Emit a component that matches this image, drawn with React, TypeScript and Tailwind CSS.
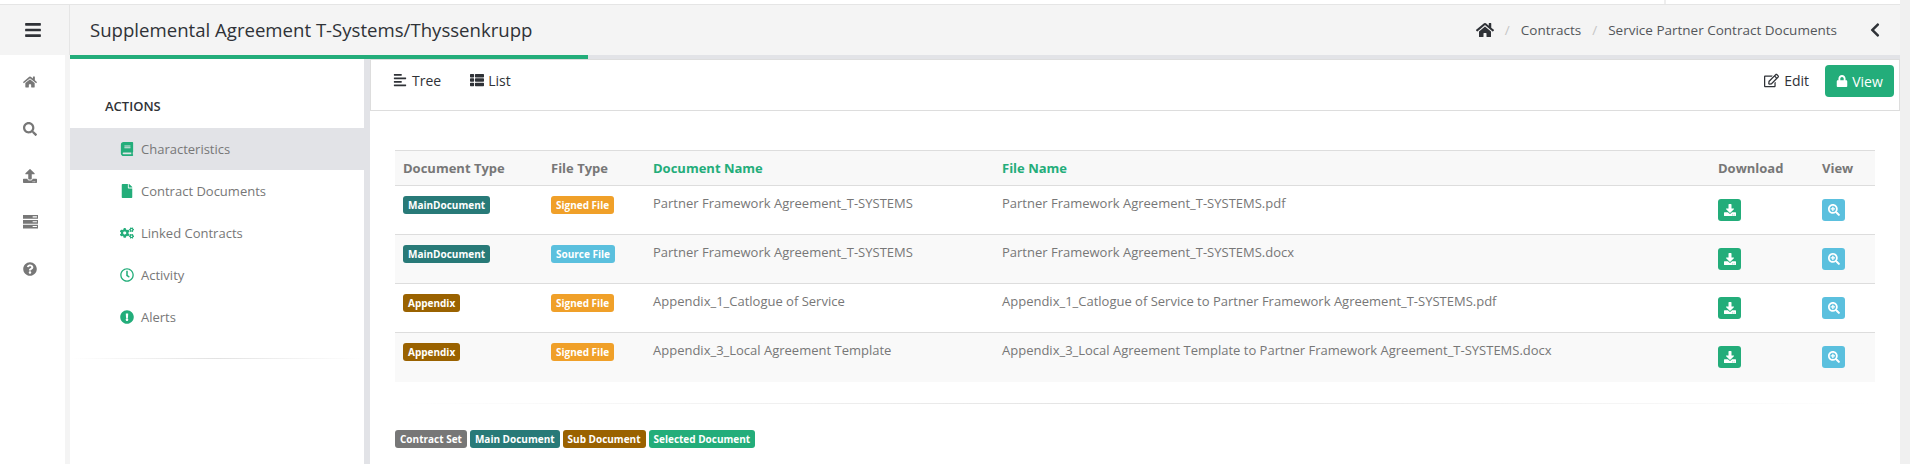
import {
  FaAlignLeft,
  FaBars,
  FaBook,
  FaChevronLeft,
  FaCogs,
  FaDownload,
  FaExclamationCircle,
  FaFile,
  FaHome,
  FaLock,
  FaQuestionCircle,
  FaRegClock,
  FaRegEdit,
  FaSearch,
  FaSearchPlus,
  FaThList,
  FaUpload,
} from "react-icons/fa";

// three stacked bars with the small cut-outs on the right
function StackIcon({ className }: { className: string }) {
  return (
    <svg viewBox="0 0 14 14" className={className} fill="currentColor">
      <path d="M0 1h14v3.5H0zM0 5.5h14v3.5H0zM0 10h14v3.5H0z" />
      <path d="M9 2.2h4v1H9zM9 6.7h4v1H9zM9 11.2h4v1H9z" fill="#fff" />
    </svg>
  );
}

const sideIcons = [
  { icon: FaHome, className: "h-[14px] w-[14px] mt-[15px]" },
  { icon: FaSearch, className: "h-[14px] w-[14px] mt-[33px]" },
  { icon: FaUpload, className: "h-[14px] w-[14px] mt-[33px]" },
  { icon: StackIcon, className: "h-[15px] w-[15px] mt-[31px]" },
  { icon: FaQuestionCircle, className: "h-[14px] w-[14px] mt-[33px]" },
];

const actions = [
  { label: "Characteristics", icon: FaBook, active: true },
  { label: "Contract Documents", icon: FaFile, active: false },
  { label: "Linked Contracts", icon: FaCogs, active: false },
  { label: "Activity", icon: FaRegClock, active: false },
  { label: "Alerts", icon: FaExclamationCircle, active: false },
];

const teal = "bg-[#287a78]";
const brown = "bg-[#9a6200]";
const orange = "bg-[#f0a029]";
const blue = "bg-[#5bc0de]";

const rows = [
  {
    type: "MainDocument",
    typeColor: teal,
    file: "Signed File",
    fileColor: orange,
    doc: "Partner Framework Agreement_T-SYSTEMS",
    name: "Partner Framework Agreement_T-SYSTEMS.pdf",
  },
  {
    type: "MainDocument",
    typeColor: teal,
    file: "Source File",
    fileColor: blue,
    doc: "Partner Framework Agreement_T-SYSTEMS",
    name: "Partner Framework Agreement_T-SYSTEMS.docx",
  },
  {
    type: "Appendix",
    typeColor: brown,
    file: "Signed File",
    fileColor: orange,
    doc: "Appendix_1_Catlogue of Service",
    name: "Appendix_1_Catlogue of Service to Partner Framework Agreement_T-SYSTEMS.pdf",
  },
  {
    type: "Appendix",
    typeColor: brown,
    file: "Signed File",
    fileColor: orange,
    doc: "Appendix_3_Local Agreement Template",
    name: "Appendix_3_Local Agreement Template to Partner Framework Agreement_T-SYSTEMS.docx",
  },
];

const legend = [
  { label: "Contract Set", color: "bg-[#777777]" },
  { label: "Main Document", color: teal },
  { label: "Sub Document", color: brown },
  { label: "Selected Document", color: "bg-[#23ad7a]" },
];

function Badge({ label, color }: { label: string; color: string }) {
  return (
    <span className={`inline-block rounded-[3px] px-[5px] text-[10px] leading-[18px] font-bold whitespace-nowrap text-white ${color}`}>
      {label}
    </span>
  );
}

export default function App() {
  return (
    <div className="flex h-[464px] overflow-hidden bg-[#f0f0f0] font-['Open_Sans',sans-serif] text-[13px] text-[#777777]">
      <div className="flex w-[1900px] flex-col bg-white">
        <div className="flex h-[5px] shrink-0 border-b border-[#e5e5e5]">
          <div className="w-[1666px] border-r-2 border-[#eeeeee]" />
        </div>

        <header className="flex h-[50px] shrink-0 items-center bg-[#f4f4f4]">
          <div className="flex h-full w-[70px] items-center justify-center border-r border-[#e5e5e5]">
            <FaBars className="mr-[3px] h-[18px] w-[18px] text-[#2f3237]" />
          </div>
          <h1 className="ml-[20px] text-[18.6px] text-[#2f3237]">Supplemental Agreement T-Systems/Thyssenkrupp</h1>
          <nav className="mr-[17px] ml-auto flex items-center text-[13.5px] text-[#53565a]">
            <FaHome className="h-[18px] w-[18px] text-[#2f3237]" />
            <span className="mx-[11px] text-[#c5c5c5]">/</span>
            <span>Contracts</span>
            <span className="mx-[11px] text-[#c5c5c5]">/</span>
            <span>Service Partner Contract Documents</span>
            <FaChevronLeft className="ml-[30px] h-[16px] w-[16px] text-[#2f3237]" />
          </nav>
        </header>

        <div className="flex min-h-0 flex-1">
          <aside className="flex w-[70px] shrink-0 flex-col items-center border-r-[5px] border-[#f4f4f4] pt-[5px] pr-[5px] text-[#777777]">
            <div className="flex flex-col items-center">
              {sideIcons.map(({ icon: Icon, className }, i) => (
                <Icon key={i} className={className} />
              ))}
            </div>
          </aside>

          <div className="flex min-w-0 flex-1 flex-col">
            <div className="h-[4px] shrink-0 bg-[#e2e3e7]">
              <div className="h-full w-[518px] bg-[#23ad7a]" />
            </div>

            <div className="flex min-h-0 flex-1">
              <nav className="w-[300px] shrink-0 border-r-[6px] border-[#e2e3e7]">
                <div className="pt-[37px] pb-[12px] pl-[35px] text-[13px] leading-[20px] font-semibold text-[#2f3237]">ACTIONS</div>
                {actions.map((a) => (
                  <div key={a.label} className={`flex h-[42px] items-center pl-[50px] ${a.active ? "bg-[#e2e3e7]" : ""}`}>
                    <span className="flex w-[21px] justify-start text-[#23ad7a]">
                      <a.icon className="h-[14px] w-[14px]" />
                    </span>
                    <span className="pt-[2px]">{a.label}</span>
                  </div>
                ))}
                <div className="mt-[20px] h-px bg-gradient-to-r from-transparent via-[#e2e2e2] to-transparent" />
              </nav>

              <main className="min-w-0 flex-1">
                <div className="flex h-[52px] items-start border-t border-r border-b border-l border-[#dddddd] pt-[5px] pr-[5px] pl-[22px] text-[14px] text-[#2f3237]">
                  <div className="flex h-[30px] items-center">
                    <FaAlignLeft className="mr-[5px] h-[14px] w-[14px]" />
                    <span>Tree</span>
                  </div>
                  <div className="ml-[29px] flex h-[30px] items-center">
                    <FaThList className="mr-[4px] h-[14px] w-[14px]" />
                    <span>List</span>
                  </div>
                  <div className="ml-auto flex h-[32px] items-start">
                    <div className="flex h-[30px] items-center">
                      <FaRegEdit className="mr-[5px] h-[15px] w-[15px]" />
                      <span>Edit</span>
                    </div>
                    <button className="ml-[16px] flex h-[32px] w-[69px] items-center justify-center rounded-[4px] bg-[#23ad7a] text-white">
                      <FaLock className="mr-[4px] h-[12px] w-[12px]" />
                      View
                    </button>
                  </div>
                </div>

                <div className="mt-[39px] mr-[25px] ml-[25px]">
                  <table className="w-full table-fixed border-collapse">
                    <colgroup>
                      <col className="w-[148px]" />
                      <col className="w-[102px]" />
                      <col className="w-[349px]" />
                      <col className="w-[716px]" />
                      <col className="w-[104px]" />
                      <col className="w-[61px]" />
                    </colgroup>
                    <thead>
                      <tr className="h-[35px] border-t border-b border-[#dddddd] bg-[#f8f8f8] text-left">
                        <th className="px-2 pt-[2px] font-bold">Document Type</th>
                        <th className="px-2 pt-[2px] font-bold">File Type</th>
                        <th className="px-2 pt-[2px] font-bold text-[#23ad7a]">Document Name</th>
                        <th className="px-2 pt-[2px] font-bold text-[#23ad7a]">File Name</th>
                        <th className="px-2 pt-[2px] font-bold">Download</th>
                        <th className="px-2 pt-[2px] font-bold">View</th>
                      </tr>
                    </thead>
                    <tbody>
                      {rows.map((r, i) => (
                        <tr key={i} className={`h-[49px] align-top ${i < 3 ? "border-b border-[#dddddd]" : ""} ${i % 2 === 1 ? "bg-[#f9f9f9]" : ""}`}>
                          <td className="px-2 pt-[9px]">
                            <Badge label={r.type} color={r.typeColor} />
                          </td>
                          <td className="px-2 pt-[9px]">
                            <Badge label={r.file} color={r.fileColor} />
                          </td>
                          <td className="px-2 pt-[8px] leading-[18px]">{r.doc}</td>
                          <td className="px-2 pt-[8px] leading-[18px]">{r.name}</td>
                          <td className="px-2 pt-[13px]">
                            <button className="flex h-[22px] w-[23px] items-center justify-center rounded-[3px] bg-[#23ad7a] text-white">
                              <FaDownload className="h-[12px] w-[12px]" />
                            </button>
                          </td>
                          <td className="px-2 pt-[13px]">
                            <button className="flex h-[22px] w-[23px] items-center justify-center rounded-[3px] bg-[#5bc0de] text-white">
                              <FaSearchPlus className="h-[12px] w-[12px]" />
                            </button>
                          </td>
                        </tr>
                      ))}
                    </tbody>
                  </table>

                  <div className="mt-[21px] h-px bg-gradient-to-r from-transparent via-[#e2e2e2] to-transparent" />

                  <div className="mt-[26px] flex gap-[3px]">
                    {legend.map((l) => (
                      <Badge key={l.label} label={l.label} color={l.color} />
                    ))}
                  </div>
                </div>
              </main>
            </div>
          </div>
        </div>
      </div>
    </div>
  );
}
